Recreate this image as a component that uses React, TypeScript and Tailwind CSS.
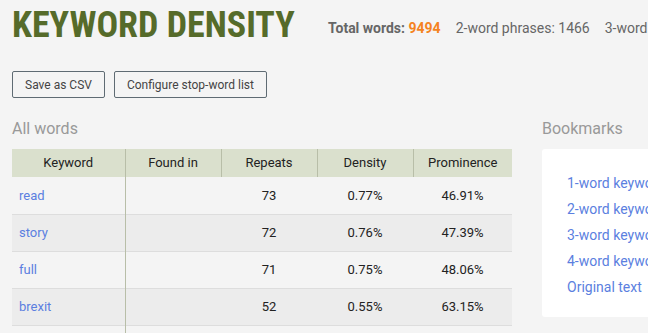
const rows = [
  { word: 'read', repeats: 73, density: '0.77%', prominence: '46.91%' },
  { word: 'story', repeats: 72, density: '0.76%', prominence: '47.39%' },
  { word: 'full', repeats: 71, density: '0.75%', prominence: '48.06%' },
  { word: 'brexit', repeats: 52, density: '0.55%', prominence: '63.15%' },
]

const bookmarks = ['1-word keywords', '2-word keywords', '3-word keywords', '4-word keywords', 'Original text']

export default function App() {
  return (
    <div className="min-h-screen w-full overflow-hidden bg-[#f4f4f4] font-['Roboto',sans-serif]">
      <div className="pl-3 pt-[3px]">
        {/* Header */}
        <div className="flex items-center h-[44px] whitespace-nowrap">
          <h1 className="text-[36px] font-bold leading-none text-[#566b2a] [font-stretch:condensed] w-[282px] shrink-0">
            KEYWORD DENSITY
          </h1>
          <div className="ml-[34px] mt-[6px] flex items-center gap-[15px] text-[14px] text-[#666]">
            <span>
              <span className="font-bold">Total words:</span>{' '}
              <span className="font-bold text-[#f4831f]">9494</span>
            </span>
            <span>2-word phrases: 1466</span>
            <span>3-word phrases: 412</span>
          </div>
        </div>

        {/* Buttons */}
        <div className="mt-[24px] flex gap-[9px]">
          <button className="h-[27px] px-[12px] border border-[#5f6b73] rounded-[2px] text-[12px] text-[#444]">
            Save as CSV
          </button>
          <button className="h-[27px] px-[12px] border border-[#5f6b73] rounded-[2px] text-[12px] text-[#444]">
            Configure stop-word list
          </button>
        </div>

        <div className="mt-[21px] flex gap-[30px] whitespace-nowrap">
          {/* All words */}
          <div className="w-[500px] shrink-0">
            <h2 className="text-[16px] leading-[20px] text-[#999]">All words</h2>
            <table className="mt-[10px] w-full border-collapse text-[13px] text-[#222]">
              <thead>
                <tr className="h-[28px] bg-[#dae0cd]">
                  <th className="w-[113px] font-normal border-r border-[#b8bea8]">Keyword</th>
                  <th className="w-[96px] font-normal border-r border-[#b8bea8]">Found in</th>
                  <th className="w-[96px] font-normal border-r border-[#b8bea8]">Repeats</th>
                  <th className="w-[96px] font-normal border-r border-[#b8bea8]">Density</th>
                  <th className="font-normal">Prominence</th>
                </tr>
              </thead>
              <tbody>
                {rows.map((r, i) => (
                  <tr key={r.word} className={`h-[37px] border-b border-[#dddddd] ${i % 2 ? 'bg-[#ececec]' : 'bg-[#f4f4f4]'}`}>
                    <td className="pl-[7px] text-left text-[#5b7fe0] border-r border-[#b8bea8]">{r.word}</td>
                    <td></td>
                    <td className="text-center">{r.repeats}</td>
                    <td className="text-center">{r.density}</td>
                    <td className="text-center">{r.prominence}</td>
                  </tr>
                ))}
                <tr className="h-[20px]">
                  <td className="border-r border-[#b8bea8]"></td>
                  <td></td>
                  <td></td>
                  <td></td>
                  <td></td>
                </tr>
              </tbody>
            </table>
          </div>

          {/* Bookmarks */}
          <div className="w-[220px] shrink-0">
            <h2 className="text-[16px] leading-[20px] text-[#999]">Bookmarks</h2>
            <div className="mt-[10px] h-[168px] rounded-[3px] bg-white pl-[25px] pt-[24px] flex flex-col gap-[6px] text-[14px] leading-[20px] text-[#5b7fe0]">
              {bookmarks.map((b) => (
                <a key={b} href="#">
                  {b}
                </a>
              ))}
            </div>
          </div>
        </div>
      </div>
    </div>
  )
}
